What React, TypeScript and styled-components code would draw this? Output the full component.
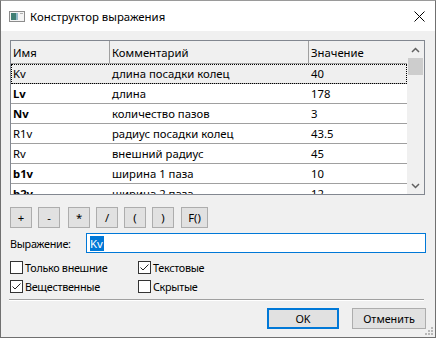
import React from "react";
import styled, { createGlobalStyle } from "styled-components";

const GlobalStyle = createGlobalStyle`
  html, body { margin: 0; padding: 0; background: #f0f0f0; }
  * { box-sizing: border-box; }
  body {
    font-family: "Noto Sans", "Open Sans", sans-serif;
    font-size: 10.8px;
    letter-spacing: -0.3px;
    color: #000;
  }
`;

const Window = styled.div`
  position: relative;
  width: 436px;
  height: 338px;
  border: 1px solid #707070;
  border-top-color: #9a9a9a;
  background: #f0f0f0;
  display: flex;
  flex-direction: column;
  overflow: hidden;
`;

const TitleBar = styled.div`
  height: 30px;
  flex: none;
  background: #fff;
  display: flex;
  align-items: center;
  padding-left: 8px;
`;

const Title = styled.span`
  margin-left: 5px;
  flex: 1;
  font-size: 11.4px;
  letter-spacing: 0;
`;

const Close = styled.div`
  width: 46px;
  height: 30px;
  display: flex;
  align-items: center;
  justify-content: center;
  padding-left: 14px;
`;

const Body = styled.div`
  flex: 1;
  padding: 9px 10px 0 9px;
  display: flex;
  flex-direction: column;
`;

const Table = styled.div`
  height: 155px;
  border: 1px solid #828790;
  background: #fff;
  display: flex;
  overflow: hidden;
  font-size: 11.3px;
  letter-spacing: 0;
`;

const List = styled.div`
  flex: 1;
  overflow: hidden;
`;

const Row = styled.div<{ $head?: boolean; $selected?: boolean }>`
  display: grid;
  grid-template-columns: 99px 199px 1fr;
  height: ${(p) => (p.$head ? 23 : 20)}px;
  border-bottom: 1px solid #a0a0a0;
  background: ${(p) => (p.$head ? "#f0f0f0" : p.$selected ? "#efefef" : "#fff")};
  outline: ${(p) => (p.$selected ? "1px dotted #000" : "none")};
  outline-offset: -1px;
`;

const Cell = styled.div<{ $head?: boolean; $bold?: boolean }>`
  display: flex;
  align-items: center;
  padding-left: 2px;
  white-space: nowrap;
  overflow: hidden;
  font-weight: ${(p) => (p.$bold ? 700 : 400)};
  border-right: ${(p) => (p.$head ? "1px solid #a0a0a0" : "none")};
  &:last-child { border-right: none; }
`;

const Scrollbar = styled.div`
  width: 17px;
  flex: none;
  background: #f0f0f0;
  display: flex;
  flex-direction: column;
`;

const Arrow = styled.div`
  height: 17px;
  display: flex;
  align-items: center;
  justify-content: center;
`;

const Track = styled.div`
  flex: 1;
  padding: 0 1px;
`;

const Thumb = styled.div`
  height: 17px;
  background: #cdcdcd;
`;

const OpRow = styled.div`
  display: flex;
  margin-top: 12px;
`;

const OpButton = styled.button<{ $w?: number; $gap?: number }>`
  width: ${(p) => p.$w ?? 22}px;
  height: 21px;
  margin-left: ${(p) => p.$gap ?? 0}px;
  padding: 0;
  border: 1px solid #adadad;
  background: #e1e1e1;
  font: inherit;
  font-size: 11.3px;
  letter-spacing: 0;
  color: #000;
`;

const ExprRow = styled.div`
  display: flex;
  align-items: center;
  margin-top: 5px;
  height: 20px;
`;

const ExprLabel = styled.label`
  width: 76px;
`;

const ExprInput = styled.div`
  flex: 1;
  height: 20px;
  margin-right: -1px;
  border: 1px solid #0078d7;
  background: #fff;
  display: flex;
  align-items: center;
  padding-left: 3px;
  font-size: 11.3px;
  letter-spacing: 0;
`;

const Selected = styled.span`
  background: #0078d7;
  color: #fff;
  line-height: 15px;
  padding-right: 1px;
`;

const Checks = styled.div`
  display: grid;
  grid-template-columns: 128px 1fr;
  grid-auto-rows: 19px;
  margin-top: 5px;
`;

const Check = styled.label`
  display: flex;
  align-items: center;
`;

const Box = styled.span`
  width: 13px;
  height: 13px;
  border: 1px solid #333;
  background: #fff;
  margin-right: 2px;
  display: flex;
`;

const Separator = styled.div`
  margin-top: 3px;
  margin-left: -1px;
  margin-right: 1px;
  border-top: 1px solid #a0a0a0;
  border-bottom: 1px solid #fff;
`;

const Footer = styled.div`
  display: flex;
  justify-content: flex-end;
  gap: 13px;
  margin-top: 7px;
  margin-right: -1px;
`;

const DlgButton = styled.button<{ $default?: boolean }>`
  width: ${(p) => (p.$default ? 72 : 74)}px;
  height: 21px;
  padding: 0;
  background: #e1e1e1;
  border: ${(p) => (p.$default ? "2px solid #0078d7" : "1px solid #adadad")};
  font: inherit;
  color: #000;
`;

const Grip = styled.svg`
  position: absolute;
  right: 1px;
  bottom: 1px;
`;

const rows = [
  { name: "Kv", comment: "длина посадки колец", value: "40", bold: false },
  { name: "Lv", comment: "длина", value: "178", bold: true },
  { name: "Nv", comment: "количество пазов", value: "3", bold: true },
  { name: "R1v", comment: "радиус посадки колец", value: "43.5", bold: false },
  { name: "Rv", comment: "внешний радиус", value: "45", bold: false },
  { name: "b1v", comment: "ширина 1 паза", value: "10", bold: true },
  { name: "b2v", comment: "ширина 2 паза", value: "12", bold: true },
];

const ops = [
  { t: "+", gap: 0 },
  { t: "-", gap: 6 },
  { t: "*", gap: 8 },
  { t: "/", gap: 6 },
  { t: "(", gap: 6 },
  { t: ")", gap: 6 },
  { t: "F()", gap: 7, w: 27 },
];

function CheckBox({ checked, label }: { checked?: boolean; label: string }) {
  return (
    <Check>
      <Box>
        {checked && (
          <svg width="11" height="11" viewBox="0 0 11 11">
            <path d="M1.5 5.5 L4 8 L9.5 2.5" fill="none" stroke="#222" strokeWidth="1" />
          </svg>
        )}
      </Box>
      {label}
    </Check>
  );
}

export default function App(): JSX.Element {
  return (
    <>
      <GlobalStyle />
      <Window>
        <TitleBar>
          <svg width="16" height="11" viewBox="0 0 16 11">
            <rect x="0.5" y="0.5" width="15" height="10" fill="#f4f4f4" stroke="#8c8c8c" />
            <rect x="2" y="2" width="5" height="7" fill="#3f7f74" />
            <rect x="7" y="2" width="2" height="7" fill="#8fb8c8" />
            <rect x="11" y="2" width="3" height="1" fill="#b0b0b0" />
          </svg>
          <Title>Конструктор выражения</Title>
          <Close>
            <svg width="11" height="11" viewBox="0 0 11 11">
              <path d="M0.5 0.5 L10.5 10.5 M10.5 0.5 L0.5 10.5" stroke="#000" strokeWidth="1" />
            </svg>
          </Close>
        </TitleBar>
        <Body>
          <Table>
            <List>
              <Row $head>
                <Cell $head>Имя</Cell>
                <Cell $head>Комментарий</Cell>
                <Cell $head>Значение</Cell>
              </Row>
              {rows.map((r, i) => (
                <Row key={r.name} $selected={i === 0}>
                  <Cell $bold={r.bold}>{r.name}</Cell>
                  <Cell>{r.comment}</Cell>
                  <Cell>{r.value}</Cell>
                </Row>
              ))}
            </List>
            <Scrollbar>
              <Arrow>
                <svg width="9" height="6" viewBox="0 0 9 6">
                  <path d="M1 5 L4.5 1.5 L8 5" fill="none" stroke="#606060" strokeWidth="1.5" />
                </svg>
              </Arrow>
              <Track>
                <Thumb />
              </Track>
              <Arrow>
                <svg width="9" height="6" viewBox="0 0 9 6">
                  <path d="M1 1 L4.5 4.5 L8 1" fill="none" stroke="#606060" strokeWidth="1.5" />
                </svg>
              </Arrow>
            </Scrollbar>
          </Table>
          <OpRow>
            {ops.map((o) => (
              <OpButton key={o.t} $gap={o.gap} $w={o.w}>
                {o.t}
              </OpButton>
            ))}
          </OpRow>
          <ExprRow>
            <ExprLabel>Выражение:</ExprLabel>
            <ExprInput>
              <Selected>Kv</Selected>
            </ExprInput>
          </ExprRow>
          <Checks>
            <CheckBox label="Только внешние" />
            <CheckBox checked label="Текстовые" />
            <CheckBox checked label="Вещественные" />
            <CheckBox label="Скрытые" />
          </Checks>
          <Separator />
          <Footer>
            <DlgButton $default>OK</DlgButton>
            <DlgButton>Отменить</DlgButton>
          </Footer>
        </Body>
        <Grip width="9" height="9" viewBox="0 0 9 9">
          <g fill="#b8b8b8">
            <rect x="6" y="0" width="2" height="2" />
            <rect x="3" y="3" width="2" height="2" />
            <rect x="6" y="3" width="2" height="2" />
            <rect x="0" y="6" width="2" height="2" />
            <rect x="3" y="6" width="2" height="2" />
            <rect x="6" y="6" width="2" height="2" />
          </g>
        </Grip>
      </Window>
    </>
  );
}
